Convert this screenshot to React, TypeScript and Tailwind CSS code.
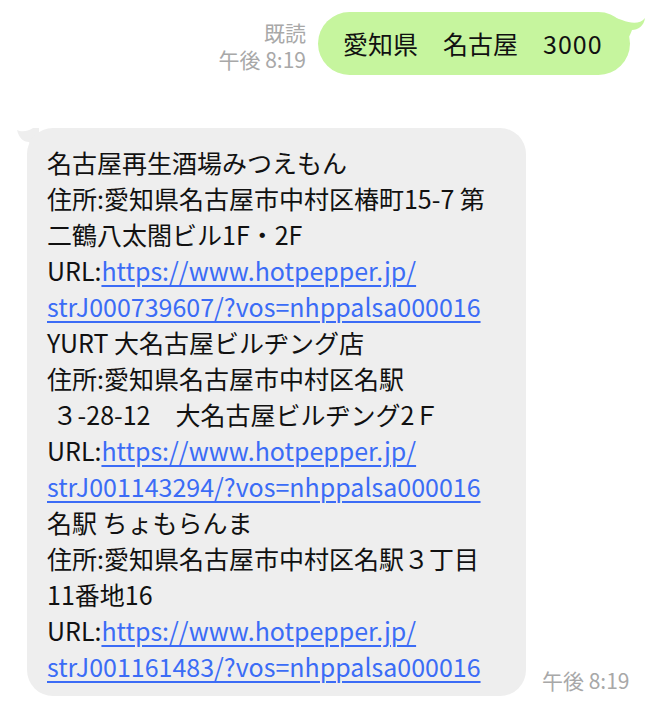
import React from "react"

const font = { fontFamily: '"Noto Sans CJK JP", "Noto Sans", sans-serif' }

const Link = ({ id }: { id: string }) => (
    <>
        <div>
            URL:<span className="text-[#3b6cf6] underline underline-offset-[4px] decoration-[1.5px]">https://www.hotpepper.jp/</span>
        </div>
        <div>
            <span className="text-[#3b6cf6] underline underline-offset-[4px] decoration-[1.5px]">{id}/?vos=nhppalsa000016</span>
        </div>
    </>
)

const App = () => {
    return (
        <div className="w-[650px] h-[706px] bg-white overflow-hidden" style={font}>
            {/* sent */}
            <div className="flex justify-end items-end pt-3 pr-5 gap-3">
                <div className="flex flex-col items-end gap-[2px] text-[21px] leading-[25px] text-[#a8a8a8] mb-[3px]">
                    <span>既読</span>
                    <span>午後 8:19</span>
                </div>
                <div className="relative">
                    <div className="w-[312px] h-[63px] pl-[25px] flex items-center rounded-full bg-[#c6f59e] text-[25px] text-[#111]">
                        愛知県　名古屋　<span className="tracking-[1px]">3000</span>
                    </div>
                    <svg className="absolute -right-[16px] top-[6px]" width="30" height="34" viewBox="0 0 30 34">
                        <path d="M0 0 L0 34 C10 26 14 18 16 12 C22 12 28 8 29 0 C24 6 16 6 6 2 Z" fill="#c6f59e" />
                    </svg>
                </div>
            </div>

            {/* received */}
            <div className="flex items-end mt-[53px] pl-[27px] pr-5 gap-4">
                <div className="relative">
                    <svg className="absolute -left-[18px] top-0" width="30" height="30" viewBox="0 0 30 30">
                        <path d="M30 0 L30 30 C24 24 22 18 20 14 C14 14 10 10 8 2 C12 4 18 4 24 0 Z" fill="#eeeeee" />
                    </svg>
                    <div className="relative w-[499px] rounded-[26px] bg-[#eeeeee] pl-[20px] pt-[16px] pb-[12px] text-[25px] leading-[36px] text-[#111] whitespace-nowrap">
                        <div>名古屋再生酒場みつえもん</div>
                        <div>住所:愛知県名古屋市中村区椿町15-7 第</div>
                        <div>二鶴八太閤ビル1F・2F</div>
                        <Link id="strJ000739607" />
                        <div>YURT 大名古屋ビルヂング店</div>
                        <div>住所:愛知県名古屋市中村区名駅</div>
                        <div>&nbsp;３-28-12　大名古屋ビルヂング2Ｆ</div>
                        <Link id="strJ001143294" />
                        <div>名駅 ちょもらんま</div>
                        <div>住所:愛知県名古屋市中村区名駅３丁目</div>
                        <div>11番地16</div>
                        <Link id="strJ001161483" />
                    </div>
                </div>
                <span className="text-[21px] leading-[27px] text-[#a8a8a8] mb-[2px]">午後 8:19</span>
            </div>
        </div>
    )
}

export default App
